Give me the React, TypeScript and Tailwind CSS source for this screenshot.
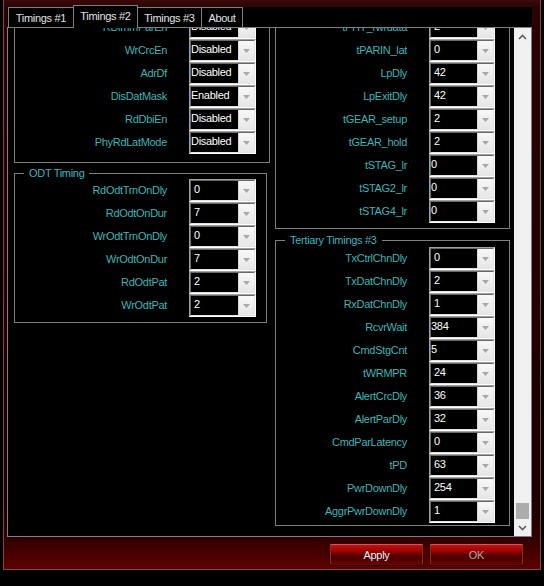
import React from "react";

type Item = [string, string, boolean?];

const leftTop: Item[] = [
    ["RDimmParEn", "Disabled", true],
    ["WrCrcEn", "Disabled", true],
    ["AdrDf", "Disabled", true],
    ["DisDatMask", "Enabled", true],
    ["RdDbiEn", "Disabled", true],
    ["PhyRdLatMode", "Disabled", true],
];

const odt: Item[] = [
    ["RdOdtTrnOnDly", "0"],
    ["RdOdtOnDur", "7"],
    ["WrOdtTrnOnDly", "0"],
    ["WrOdtOnDur", "7"],
    ["RdOdtPat", "2"],
    ["WrOdtPat", "2"],
];

const rightTop: Item[] = [
    ["tPHY_rwrdata", "2"],
    ["tPARIN_lat", "0"],
    ["LpDly", "42"],
    ["LpExitDly", "42"],
    ["tGEAR_setup", "2"],
    ["tGEAR_hold", "2"],
    ["tSTAG_lr", "0", true],
    ["tSTAG2_lr", "0", true],
    ["tSTAG4_lr", "0", true],
];

const tertiary: Item[] = [
    ["TxCtrlChnDly", "0"],
    ["TxDatChnDly", "2"],
    ["RxDatChnDly", "1"],
    ["RcvrWait", "384", true],
    ["CmdStgCnt", "5", true],
    ["tWRMPR", "24"],
    ["AlertCrcDly", "36"],
    ["AlertParDly", "32"],
    ["CmdParLatency", "0"],
    ["tPD", "63"],
    ["PwrDownDly", "254"],
    ["AggrPwrDownDly", "1"],
];

function Combo({
    value,
    wide,
    tight,
}: {
    value: string;
    wide?: boolean;
    tight?: boolean;
}) {
    return (
        <div
            className={
                (wide ? "w-[67px]" : "w-[66px]") +
                " h-[23px] shrink-0 border border-t-[#a0a0a0] border-l-[#a0a0a0] border-r-white border-b-white"
            }
        >
            <div className="flex h-full bg-black border border-t-[#696969] border-l-[#696969] border-r-[#e3e3e3] border-b-[#e3e3e3]">
                <div
                    className={
                        (tight ? "pl-0" : "pl-[3px]") +
                        " flex-1 pt-px text-white leading-[14px] whitespace-nowrap overflow-hidden"
                    }
                >
                    {value}
                </div>
                <div className="w-4 flex items-center justify-center bg-[linear-gradient(to_bottom,#f8f8f8,#e6e6e6)] border-l border-[#d9d9d9]">
                    <svg width="7" height="4" viewBox="0 0 7 4">
                        <path d="M0 0H7L3.5 4Z" fill="#a8a8a8" />
                    </svg>
                </div>
            </div>
        </div>
    );
}

function Row({ item, left }: { item: Item; left?: boolean }) {
    return (
        <div className="flex items-center h-[23px]">
            <div
                className={
                    (left ? "w-[152px]" : "w-[131px]") +
                    " text-right text-[#3cb4b8] whitespace-nowrap"
                }
            >
                {item[0]}
            </div>
            <div className="ml-[22px]">
                <Combo value={item[1]} wide={left} tight={item[2]} />
            </div>
        </div>
    );
}

function Legend({ children }: { children: React.ReactNode }) {
    return (
        <legend className="ml-[9px] px-[5px] leading-[12px] text-[#3cb4c0]">
            {children}
        </legend>
    );
}

function Tab({ label, active }: { label: string; active?: boolean }) {
    return (
        <div
            className={
                active
                    ? "relative z-10 -ml-px -mb-px h-[23px] w-[65px] border border-b-0 border-[#7f7f7f] bg-black flex items-center justify-center pb-[2px]"
                    : "-ml-px first:ml-0 h-[20px] border border-b-0 border-[#7f7f7f] bg-black flex items-center justify-center pt-px " +
                      (label === "About" ? "w-[42px]" : label === "Timings #1" ? "w-[66px]" : "w-[65px]")
            }
        >
            <span className="text-[#e2e2e2] whitespace-nowrap">{label}</span>
        </div>
    );
}

function Chevron({ up }: { up?: boolean }) {
    return (
        <svg width="9" height="6" viewBox="0 0 9 6">
            <path
                d={up ? "M1 5L4.5 1.5L8 5" : "M1 1L4.5 4.5L8 1"}
                fill="none"
                stroke="#606060"
                strokeWidth="1.6"
            />
        </svg>
    );
}

function ScrollBar() {
    return (
        <div className="w-[17px] h-full bg-[#f0f0f0] flex flex-col shrink-0">
            <div className="h-[17px] flex items-center justify-center">
                <Chevron up />
            </div>
            <div className="flex-1 flex flex-col justify-end px-[2px]">
                <div className="h-[16px] bg-[#acacac]" />
            </div>
            <div className="h-[17px] flex items-center justify-center">
                <Chevron />
            </div>
        </div>
    );
}

function RedButton({ label, dim }: { label: string; dim?: boolean }) {
    return (
        <button
            className={
                "w-[95px] h-[23px] border border-[#240000] rounded-[2px] shadow-[inset_0_1px_0_#e05050,inset_1px_0_0_#a02020,inset_-1px_0_0_#a02020] bg-[linear-gradient(to_bottom,#c41414_0%,#960404_35%,#5a0000_55%,#4a0000_70%,#700404_100%)] leading-[14px] " +
                (dim ? "text-[#b4a4a4]" : "text-[#ececf4]")
            }
        >
            {label}
        </button>
    );
}

export default function App() {
    return (
        <div className="w-[544px] h-[586px] bg-black overflow-hidden font-['Liberation_Sans',Arial,sans-serif] text-[11px] tracking-[-0.3px]">
            <div className="ml-[3px] w-[538px] h-[570px] border-l border-r border-b border-[#8a4444] bg-[linear-gradient(to_bottom,#3c0a0a_0px,#2a0303_8px,#1a0000_500px,#2e0000_537px,#4a0000_555px,#5c0202_570px)] pl-[3px] pt-[7px] flex flex-col">
                <div className="w-[525px] flex flex-col">
                    <div className="h-[20px] flex items-end pl-px bg-black">
                        <Tab label="Timings #1" />
                        <Tab label="Timings #2" active />
                        <Tab label="Timings #3" />
                        <Tab label="About" />
                    </div>
                    <div className="h-[510px] border border-[#7f7f7f] bg-black flex">
                        <div className="flex-1 h-full overflow-hidden">
                            <div className="-mt-[12px] pl-[6px] flex gap-[5px] items-start">
                                <div className="w-[256px] flex flex-col">
                                    <div className="border-x border-b border-[#7f7f7f] pb-[8px]">
                                        {leftTop.map((it) => (
                                            <Row key={it[0]} item={it} left />
                                        ))}
                                    </div>
                                    <fieldset className="mt-[4px] w-[253px] border border-[#7f7f7f] pb-[5px]">
                                        <Legend>ODT Timing</Legend>
                                        {odt.map((it) => (
                                            <Row key={it[0]} item={it} left />
                                        ))}
                                    </fieldset>
                                </div>
                                <div className="w-[235px] flex flex-col">
                                    <div className="border-x border-b border-[#7f7f7f] pb-[5px]">
                                        {rightTop.map((it) => (
                                            <Row key={it[0]} item={it} />
                                        ))}
                                    </div>
                                    <fieldset className="mt-[5px] border border-[#7f7f7f] pt-px pb-[2px]">
                                        <Legend>Tertiary Timings #3</Legend>
                                        {tertiary.map((it) => (
                                            <Row key={it[0]} item={it} />
                                        ))}
                                    </fieldset>
                                </div>
                            </div>
                        </div>
                        <ScrollBar />
                    </div>
                </div>
                <div className="mt-[6px] pr-[16px] flex justify-end gap-[5px]">
                    <RedButton label="Apply" />
                    <RedButton label="OK" dim />
                </div>
            </div>
        </div>
    );
}
